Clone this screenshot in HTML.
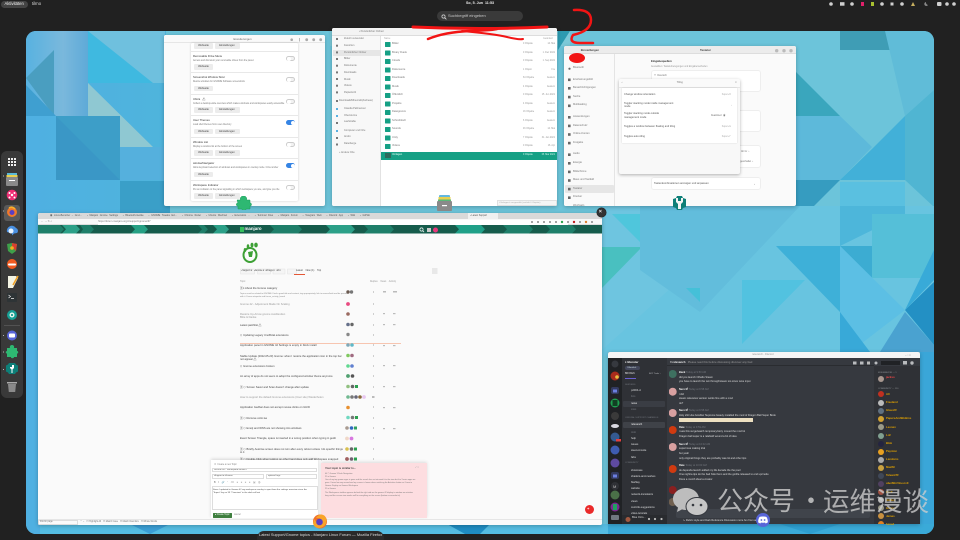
<!DOCTYPE html>
<html lang="de"><head><meta charset="utf-8"><title>Aktivitäten</title>
<style>
html{margin:0;padding:0;width:960px;height:540px;overflow:hidden;background:#212121}
body{margin:0;padding:0;width:960px;height:540px;overflow:hidden;background:#212121;position:relative;font-family:"Liberation Sans","Noto Sans CJK SC",sans-serif;color:#3d3d3d;filter:blur(.32px)}
div,span,svg{position:absolute;box-sizing:border-box}
.t{white-space:nowrap;line-height:1}
.win{background:#fafafa;border-radius:2px;overflow:hidden;box-shadow:0 1px 4px rgba(0,0,0,.25)}
.btn{height:5.5px;background:#ececec;border-radius:1px;font-size:2.6px;line-height:5.5px;text-align:center;color:#444}
.sw{width:9px;height:5px;border-radius:3px;background:#f2f2f2;border:.5px solid #ccc}
.sw.on{background:#3584e4;border-color:#3584e4}
.sw i{position:absolute;width:4px;height:4px;border-radius:50%;background:#fff;top:0;left:0}
.sw.on i{left:4.2px}
.g{color:#333;font-size:2.8px}
.dim{color:#777}
.d{color:#b9bbbe;font-size:2.6px}
.y{color:#e0a100;font-size:2.8px;font-weight:bold}
.f{font-size:2.7px;color:#444;left:202px}
</style></head><body>

<!-- top bar -->
<div style="left:1px;top:1px;width:27px;height:6.5px;background:#444;border-radius:4px"></div>
<div class="t" style="left:4.5px;top:2.2px;font-size:4.2px;color:#eee">Aktivitäten</div>
<div class="t" style="left:32px;top:2.2px;font-size:4.2px;color:#ddd">tilrno</div>
<div class="t" style="left:466px;top:2.2px;font-size:3.6px;font-weight:bold;color:#eee">So, 5. Jun &nbsp;11:53</div>

<!-- tray -->
<svg style="left:825px;top:0" width="135" height="8" viewBox="0 0 135 8">
<g fill="#d0d0d0"><circle cx="6" cy="4" r="1.800"/><rect x="15" y="2.200" width="4.500" height="3.500"/><circle cx="27" cy="4" r="1.800"/><rect x="36" y="2" width="3" height="4" fill="#e0206a"/><rect x="46" y="2" width="3" height="4" fill="#a8c030"/><circle cx="57" cy="4" r="1.800"/><rect x="65.500" y="2.500" width="3" height="3"/><circle cx="77" cy="4" r="1.800"/><path d="M86 6l2-4 2 4z" fill="#c8b060"/><path d="M101 2a2 2 0 1 0 2 3 2.500 2.500 0 0 1-2-3z" fill="#888"/><rect x="112" y="2" width="4.500" height="4" rx="1"/><circle cx="122" cy="4" r="1.800"/><circle cx="129" cy="4" r="1.800"/></g></svg>

<!-- wallpaper -->
<svg style="left:26px;top:31px" width="908" height="503" viewBox="26 31 908 503">
<defs><clipPath id="c"><rect x="26" y="31" width="908" height="503" rx="10"/></clipPath>
<linearGradient id="b1" x1="0" y="0" x2="1" y="1"><stop offset="0" stop-color="#58b2e0"/><stop offset=".6" stop-color="#7ab8dc"/><stop offset="1" stop-color="#5eaad8"/></linearGradient>
<linearGradient id="b2" x1="0" y="0" x2="1" y="0"><stop offset="0" stop-color="#4fb0e2"/><stop offset="1" stop-color="#4fb4dc"/></linearGradient></defs>
<g clip-path="url(#c)">
<rect x="26" y="31" width="908" height="503" fill="#6cc4da"/>
<rect x="26" y="31" width="140" height="503" fill="url(#b2)"/>
<rect x="26" y="31" width="62" height="85" fill="url(#b1)"/>
<polygon points="88,31 165,31 165,83 88,83" fill="#6fc0de"/>
<polygon points="88,31 153,83 88,83" fill="#3fb9e0"/>
<polygon points="26,78 54,50 54,116" fill="#4a9ec0"/>
<polygon points="26,85 56,116 26,116" fill="#3f9fd0"/>
<polygon points="88,83 153,147 120,147 120,116 88,116" fill="#8fc8d2"/>
<rect x="56" y="116" width="64" height="64" fill="#3d9ec8"/>
<polygon points="56,116 120,180 56,180" fill="#3a97c6"/>
<rect x="120" y="147" width="50" height="33" fill="#55b0dd"/>
<rect x="120" y="181" width="50" height="32" fill="#3a9fc8"/>
<rect x="330" y="31" width="240" height="15" fill="#7cc9d8"/>
<polygon points="558,31 570,31 558,50" fill="#2d9ab0"/>
<polygon points="840,31 885,31 905,50 840,50" fill="#3f9db5"/>
<polygon points="885,31 934,31 934,90 905,116" fill="#60bcd8"/>
<polygon points="796,72 840,116 796,116" fill="#3aa6bd"/>
<polygon points="796,116 840,116 872,147 840,180 796,180" fill="#5db9da"/>
<polygon points="873,148 905,116 905,180 840,180" fill="#42b0d8"/>
<polygon points="905,116 934,90 934,207 905,180" fill="#50b5d2"/>
<polygon points="795,180 840,180 806,214 795,214" fill="#369cc0"/>
<polygon points="840,182 905,182 905,215 934,215 934,250 840,250" fill="#5ac0e0"/>
<!-- lower right -->
<rect x="602" y="206" width="332" height="150" fill="#68c4e0"/>
<polygon points="602,206 700,206 680,280 602,350" fill="#6ec5e0"/>
<polygon points="612,214 676,214 676,278" fill="#4fc6dc"/>
<polygon points="602,247 642,247 602,288" fill="#49c0c0"/>
<polygon points="640,206 800,206 700,312 640,270" fill="#62bddc"/>
<polygon points="686,288 700,288 700,302" fill="#45c0d8"/>
<polygon points="742,280 805,280 742,344" fill="#52c2e0"/>
<polygon points="776,246 840,246 840,312" fill="#3eb0d8"/>
<polygon points="840,206 905,206 905,214 840,246" fill="#4db6da"/>
<polygon points="840,246 872,246 872,278" fill="#3cacd2"/>
<rect x="872" y="214" width="62" height="64" fill="#55bfd8"/>
<polygon points="840,246 905,310 840,360" fill="#5cbfe4"/>
<polygon points="905,310 934,282 934,345" fill="#2390c4"/>
<polygon points="934,280 934,250 905,310" fill="#38aad8"/>
<polygon points="840,312 870,352 840,352" fill="#38a9d8"/>
<polygon points="880,352 905,312 934,345 934,352" fill="#4aa2d0"/>
<rect x="40" y="524" width="570" height="10" fill="#55bde2"/>
<polygon points="447,524 490,524 480,534 465,534" fill="#1f8dc2"/>
<polygon points="130,524 170,524 150,534" fill="#3b9ed4"/>
<polygon points="920,352 934,352 934,534 920,534" fill="#3aa6d8"/>
<rect x="608" y="524" width="326" height="10" fill="#3aaad8"/>
<polygon points="780,524 840,524 810,534" fill="#2e9fd0"/>
</g></svg>

<!-- search -->
<div style="left:437px;top:11px;width:86px;height:10px;border-radius:5px;background:#3a3a3a"></div>
<svg style="left:441px;top:13.500px" width="6" height="6"><circle cx="2.500" cy="2.500" r="1.600" fill="none" stroke="#ddd" stroke-width=".7"/><path d="M3.700 3.700L5.400 5.400" stroke="#ddd" stroke-width=".8"/></svg>
<div class="t" style="left:448px;top:14px;font-size:4px;color:#c8c8c8">Suchbegriff eingeben</div>

<!-- window 1: extensions -->
<div class="win" style="left:164px;top:35px;width:161px;height:171px">
<div style="left:0;top:0;width:161px;height:8px;background:#fafafa;border-bottom:.4px solid #e6e6e6"></div>
<div class="t" style="left:69.500px;top:2.500px;font-size:2.800px;color:#666">Erweiterungen</div>
<svg style="left:125px;top:1.500px" width="34" height="6" fill="#aaa"><circle cx="2.700" cy="2.700" r="1.300"/><rect x="10" y="1" width=".8" height="3.500"/><circle cx="17.700" cy="2.700" r="1.400"/><circle cx="24.700" cy="2.700" r="1.400"/><circle cx="31.700" cy="2.700" r="1.400"/></svg>
<div style="left:27px;top:8px;width:107px;height:158px;background:#fff;box-shadow:0 0 2px rgba(0,0,0,.18);border-radius:1.500px"></div>
<div class="btn" style="left:30px;top:8px;width:19px">Webseite</div><div class="btn" style="left:50.500px;top:8px;width:25px">Einstellungen</div>
<div style="left:27px;top:15.500px;width:107px;border-top:.4px solid #e8e8e8"></div>
<div class="t g" style="left:29px;top:19.500px">Removable Drive Menu</div><div class="t dim" style="left:29px;top:24.500px;font-size:2.300px">Access and dismount your removable drives from the panel.</div><div class="sw" style="left:122px;top:20.500px"><i></i></div>
<div class="btn" style="left:30px;top:29px;width:19px">Webseite</div>
<div style="left:27px;top:37px;width:107px;border-top:.4px solid #e8e8e8"></div>
<div class="t g" style="left:29px;top:41px">Screenshot Window Sizer</div><div class="t dim" style="left:29px;top:46px;font-size:2.300px">Resize windows for GNOME Software screenshots</div><div class="sw" style="left:122px;top:42px"><i></i></div>
<div class="btn" style="left:30px;top:50.500px;width:19px">Webseite</div>
<div style="left:27px;top:58.500px;width:107px;border-top:.4px solid #e8e8e8"></div>
<div class="t g" style="left:29px;top:62.500px">Ubiza &nbsp; ⚠</div><div class="t dim" style="left:29px;top:67.500px;font-size:2.300px">Collect a desktop-wide overview which makes windows and workspaces easily accessible</div><div class="sw" style="left:122px;top:63.500px"><i></i></div>
<div class="btn" style="left:30px;top:72px;width:19px">Webseite</div><div class="btn" style="left:50.500px;top:72px;width:25px">Einstellungen</div>
<div style="left:27px;top:80px;width:107px;border-top:.4px solid #e8e8e8"></div>
<div class="t g" style="left:29px;top:84px">User Themes</div><div class="t dim" style="left:29px;top:89px;font-size:2.300px">Load shell themes from user directory</div><div class="sw on" style="left:122px;top:85px"><i></i></div>
<div class="btn" style="left:30px;top:93.500px;width:19px">Webseite</div><div class="btn" style="left:50.500px;top:93.500px;width:25px">Einstellungen</div>
<div style="left:27px;top:101.500px;width:107px;border-top:.4px solid #e8e8e8"></div>
<div class="t g" style="left:29px;top:105.500px">Window List</div><div class="t dim" style="left:29px;top:110.500px;font-size:2.300px">Display a window list at the bottom of the screen</div><div class="sw" style="left:122px;top:106.500px"><i></i></div>
<div class="btn" style="left:30px;top:115px;width:19px">Webseite</div><div class="btn" style="left:50.500px;top:115px;width:25px">Einstellungen</div>
<div style="left:27px;top:123px;width:107px;border-top:.4px solid #e8e8e8"></div>
<div class="t g" style="left:29px;top:127px">windowNavigator</div><div class="t dim" style="left:29px;top:132px;font-size:2.300px">Allow keyboard selection of windows and workspaces in overlay mode. Ctrl+number</div><div class="sw on" style="left:122px;top:128px"><i></i></div>
<div class="btn" style="left:30px;top:136.500px;width:19px">Webseite</div>
<div style="left:27px;top:144.500px;width:107px;border-top:.4px solid #e8e8e8"></div>
<div class="t g" style="left:29px;top:148.500px">Workspace Indicator</div><div class="t dim" style="left:29px;top:153.500px;font-size:2.300px">Put an indicator on the panel signalling in which workspace you are, and give you the</div><div class="sw" style="left:122px;top:149.500px"><i></i></div>
<div class="btn" style="left:30px;top:158px;width:19px">Webseite</div><div class="btn" style="left:50.500px;top:158px;width:25px">Einstellungen</div>
</div>
<svg style="left:236px;top:196px" width="16" height="14" viewBox="0 0 16 14"><path d="M1 4h3.500c-.8-2.500 1-4 3-4s3.800 1.500 3 4H14v3c2-.5 2 3.500 0 3v3h-4c.6 2-4.500 2-4 0H2v-3c-2.200.5-2.200-3.500 0-3z" fill="#2eb872" stroke="#1d9c5c" stroke-width=".5"/></svg>

<!-- window 2: files -->
<div class="win" style="left:332px;top:28px;width:225px;height:178px;background:#fff">
<div style="left:0;top:0;width:225px;height:7.500px;background:#f3f3f3;border-bottom:.4px solid #ddd"></div>
<div class="t" style="left:27px;top:2.500px;font-size:2.600px;color:#777">▪ Persönlicher Ordner</div>
<div style="left:0;top:7.500px;width:49px;height:171px;background:#f8f8f8;border-right:.4px solid #e2e2e2"></div>
<div style="left:1px;top:22px;width:47px;height:5.500px;background:#e6e6e6"></div>
<div class="t dim" style="left:12px;top:8.400px;font-size:2.500px;line-height:6.680px;white-space:pre">Zuletzt verwendet
Favoriten
Persönlicher Ordner
Bilder
Dokumente
Downloads
Musik
Videos
Papierkorb</div>
<svg style="left:3px;top:10px" width="7" height="120" fill="#777"><rect x="1" y="0" width="2" height="2"/><rect x="1" y="6.700" width="2" height="2"/><rect x="1" y="13.400" width="2" height="2"/><rect x="1" y="20" width="2" height="2"/><rect x="1" y="26.700" width="2" height="2"/><rect x="1" y="33.400" width="2" height="2"/><rect x="1" y="40" width="2" height="2"/><rect x="1" y="46.700" width="2" height="2"/><rect x="1" y="53.400" width="2" height="2"/><rect x="1" y="62" width="2" height="2"/><rect x="1" y="70" width="2" height="2" fill="#5ab0e0"/><rect x="1" y="77" width="2" height="2" fill="#5ab0e0"/><rect x="1" y="84" width="2" height="2"/><rect x="1" y="92" width="2" height="2" fill="#5ab0e0"/><rect x="1" y="99" width="2" height="2"/><rect x="1" y="105.500" width="2" height="2"/></svg>
<div class="t dim" style="left:7px;top:71.500px;font-size:2.500px">Download2Minecraft(Andreas)</div>
<div class="t dim" style="left:12px;top:77.800px;font-size:2.500px;line-height:6.800px;white-space:pre">Claudia Pallmanner
Obersturme
Laufstraße</div>
<div class="t dim" style="left:12px;top:99.600px;font-size:2.500px;line-height:6.800px;white-space:pre">Computer und Orte
Andro
Dateiberge</div>
<div class="t dim" style="left:7px;top:123.500px;font-size:2.500px">+ Andere Orte</div>
<div class="t dim" style="left:52px;top:9.500px;font-size:2.400px;color:#aaa">Name</div>
<div class="t dim" style="left:211px;top:9.500px;font-size:2.400px;color:#aaa">Geändert</div>
<svg style="left:49px;top:11px" width="176" height="150"><g fill="#16a085">
<rect x="4" y="3" width="5.500" height="5" rx=".5"/><rect x="4" y="11.500" width="5.500" height="5" rx=".5"/><rect x="4" y="20" width="5.500" height="5" rx=".5"/><rect x="4" y="28.500" width="5.500" height="5" rx=".5"/><rect x="4" y="37" width="5.500" height="5" rx=".5"/><rect x="4" y="45.500" width="5.500" height="5" rx=".5"/><rect x="4" y="54" width="5.500" height="5" rx=".5"/><rect x="4" y="62.500" width="5.500" height="5" rx=".5"/><rect x="4" y="71" width="5.500" height="5" rx=".5"/><rect x="4" y="79.500" width="5.500" height="5" rx=".5"/><rect x="4" y="88" width="5.500" height="5" rx=".5"/><rect x="4" y="96.500" width="5.500" height="5" rx=".5"/><rect x="4" y="105" width="5.500" height="5" rx=".5"/></g></svg>
<div class="t dim" style="left:60px;top:12.300px;font-size:2.600px;line-height:8.520px;white-space:pre">Bilder
Binary Duets
Clouds
Dokumente
Downloads
Musik
Öffentlich
Projekte
Dateigrenze
Schreibtisch
Sounds
Unity
Videos</div>
<div class="t dim" style="left:191px;top:12.300px;font-size:2.300px;line-height:8.520px;white-space:pre;color:#999">0 Objekte
0 Objekte
0 Objekte
1 Objekt
64 Objekte
4 Objekte
0 Objekte
4 Objekte
16 Objekte
6 Objekte
46 Objekte
7 Objekte
0 Objekte</div>
<div class="t dim" style="left:200px;top:12.300px;font-size:2.300px;line-height:8.520px;white-space:pre;color:#999;text-align:right;width:23px">14. Mai
1. Dez 2021
1. Sep 2021
Fre
Gestern
Gestern
15. Jun 2021
Gestern
Gestern
Gestern
14. Mai
31. Jan 2021
16. Apr</div>
<div style="left:49px;top:123.500px;width:176px;height:8px;background:#16a085"></div>
<div style="left:53px;top:125px;width:5.500px;height:5px;background:#2f6a5c"></div>
<div class="t" style="left:60px;top:126.300px;font-size:2.600px;color:#e6fff8">Vorlagen</div>
<div class="t" style="left:191px;top:126.300px;font-size:2.300px;color:#d3f4ec">0 Objekte</div><div class="t" style="left:200px;top:126.300px;font-size:2.300px;color:#d3f4ec;width:23px;text-align:right">15. Mar 2021</div>
<div style="left:165px;top:172px;width:60px;height:6px;background:#f5f5f5;border:.4px solid #e0e0e0"></div>
<div class="t dim" style="left:167px;top:173.700px;font-size:2.200px;color:#aaa">»Vorlagen« ausgewählt (enthält 0 Objekte)</div>
</div>
<svg style="left:437px;top:194px" width="15" height="17" viewBox="0 0 15 17"><rect x="2" y="1" width="11" height="3" rx="1" fill="#62b8e0"/><rect x="1.500" y="3" width="12" height="3" fill="#e8d050"/><rect x="1" y="5.500" width="13" height="3" fill="#5ab878"/><rect x="0" y="7" width="15" height="10" rx="1" fill="#8a8a8a"/><rect x="5" y="11" width="5" height="1.200" fill="#fff"/></svg>

<!-- window 3: settings -->
<div class="win" style="left:564px;top:46px;width:231.500px;height:160px">
<div style="left:0;top:0;width:232px;height:8px;background:#ececec;border-bottom:.4px solid #ddd"></div>
<div style="left:0;top:8px;width:51px;height:152px;background:#fafafa;border-right:.4px solid #e4e4e4"></div>
<div class="t" style="left:16.700px;top:2.800px;font-size:2.800px;color:#444;font-weight:bold">Einstellungen</div>
<div class="t" style="left:136px;top:2.800px;font-size:2.800px;color:#444;font-weight:bold">Tastatur</div>
<svg style="left:209px;top:1.500px" width="22" height="6" fill="#bbb"><circle cx="3.700" cy="2.700" r="1.700"/><circle cx="11" cy="2.700" r="1.700"/><circle cx="18" cy="2.700" r="1.700"/></svg>
<div class="t dim" style="left:9px;top:21.300px;font-size:2.600px">Bluetooth</div>
<div class="t dim" style="left:9px;top:29.700px;font-size:2.600px;line-height:8.600px;white-space:pre">Erscheinungsbild
Benachrichtigungen
Suche
Multitasking</div>
<div class="t dim" style="left:9px;top:67px;font-size:2.600px;line-height:8.600px;white-space:pre">Anwendungen
Datenschutz
Online-Konten
Freigabe</div>
<div class="t dim" style="left:9px;top:104.400px;font-size:2.600px;line-height:8.600px;white-space:pre">Audio
Energie
Bildschirme
Maus und Tastfeld</div>
<div style="left:1px;top:139px;width:49px;height:8px;background:#e6e6e6;border-radius:1px"></div>
<div class="t dim" style="left:9px;top:138.700px;font-size:2.600px;line-height:8.600px;white-space:pre">Tastatur
Drucker
Wechseln</div>
<svg style="left:3px;top:20px" width="5" height="140" fill="#666"><circle cx="2.500" cy="2.700" r="1.100"/><rect x="1" y="12.500" width="2.600" height="2.600"/><rect x="1" y="21" width="2.600" height="2.600"/><rect x="1" y="29.800" width="2.600" height="2.600"/><rect x="1" y="38.500" width="2.600" height="2.600"/><rect x="1" y="50" width="2.600" height="2.600"/><rect x="1" y="58.600" width="2.600" height="2.600"/><rect x="1" y="67.200" width="2.600" height="2.600"/><rect x="1" y="75.800" width="2.600" height="2.600"/><rect x="1" y="87.400" width="2.600" height="2.600"/><rect x="1" y="96" width="2.600" height="2.600"/><rect x="1" y="104.600" width="2.600" height="2.600"/><rect x="1" y="113.200" width="2.600" height="2.600"/><rect x="1" y="121.800" width="2.600" height="2.600"/><rect x="1" y="130.400" width="2.600" height="2.600"/></svg>
<div class="t" style="left:87px;top:14.300px;font-size:2.800px;color:#333;font-weight:bold">Eingabequellen</div>
<div class="t dim" style="left:87px;top:19.500px;font-size:2.300px;color:#999">Auswählen: Tastaturbelegungen und Eingabemethoden</div>
<div style="left:88px;top:25px;width:108px;height:20px;background:#fff;border-radius:1.500px;box-shadow:0 0 1.500px rgba(0,0,0,.2)"></div>
<div class="t dim" style="left:90px;top:28.500px;font-size:2.600px">⠿ &nbsp;Deutsch</div>
<div style="left:88px;top:65px;width:108px;height:20px;background:#fff;border-radius:1.500px;box-shadow:0 0 1.500px rgba(0,0,0,.2)"></div>
<div style="left:88px;top:100px;width:108px;height:21px;background:#fff;border-radius:1.500px;box-shadow:0 0 1.500px rgba(0,0,0,.2)"></div>
<div class="t dim" style="left:177px;top:104.500px;font-size:2.400px">Alt Gr &nbsp;›</div>
<div class="t dim" style="left:172px;top:114.500px;font-size:2.400px">Ausgeschaltet &nbsp;›</div>
<div class="t" style="left:88px;top:127px;font-size:2.700px;color:#333;font-weight:bold">Tastenkombinationen</div>
<div style="left:88px;top:132px;width:108px;height:11px;background:#fff;border-radius:1.500px;box-shadow:0 0 1.500px rgba(0,0,0,.2)"></div>
<div class="t" style="left:90px;top:136.500px;font-size:2.700px;color:#555">Tastenkombinationen anzeigen und anpassen</div>
<div class="t dim" style="left:190px;top:136.500px;font-size:2.800px">›</div>
</div>
<svg style="left:672px;top:195px" width="15" height="17" viewBox="0 0 15 17"><path d="M5 1h5l1 2 3 1v8l-3 1-1 2H5l-1-2-3-1V4l3-1z" fill="#0e7f78"/><path d="M6 3v3h3V3h2v4l-2 2v5H6V9L4 7V3z" fill="#f4f4f4"/></svg>

<!-- shortcuts dialog -->
<div class="win" style="left:619px;top:78.500px;width:121px;height:95px;background:#f8f8f8;border-radius:2px;box-shadow:0 1px 3px rgba(0,0,0,.3)">
<div style="left:0;top:0;width:121px;height:9px;background:#fafafa;border-bottom:.4px solid #e6e6e6"></div>
<div class="t dim" style="left:2.500px;top:2.500px;font-size:3px">‹</div>
<div class="t" style="left:57.700px;top:3px;font-size:2.600px;color:#777">Tiling</div>
<div class="t dim" style="left:116px;top:2.500px;font-size:3px">×</div>
<div style="left:2.700px;top:9px;width:115px;height:55.600px;background:#fff;box-shadow:0 0 1.500px rgba(0,0,0,.15)"></div>
<div class="t" style="left:5px;top:15.500px;font-size:2.600px;color:#555">Change window orientation</div>
<div class="t" style="left:5px;top:23.200px;font-size:2.600px;color:#555;line-height:3.500px;white-space:pre">Toggler stacking mode inside management
mode</div>
<div class="t" style="left:5px;top:33.800px;font-size:2.600px;color:#555;line-height:3.500px;white-space:pre">Toggler stacking mode outside
management mode</div>
<div class="t" style="left:5px;top:47px;font-size:2.600px;color:#555">Toggles a window between floating and tiling</div>
<div class="t" style="left:5px;top:57.400px;font-size:2.600px;color:#555">Toggles auto-tiling</div>
<div class="t dim" style="left:102.700px;top:15.500px;font-size:2.300px;color:#aaa">Super+O</div>
<div class="t dim" style="left:102.700px;top:47px;font-size:2.300px;color:#aaa">Super+G</div>
<div class="t dim" style="left:102.700px;top:57.400px;font-size:2.300px;color:#aaa">Super+Y</div>
<div class="t dim" style="left:112px;top:25px;font-size:2.800px;color:#bbb">›</div>
<div class="t" style="left:92px;top:36.500px;font-size:2.300px;color:#777">Deaktiviert &nbsp;◉</div>
</div>

<!-- red scribble -->
<svg style="left:0;top:0" width="960" height="60" viewBox="0 0 960 60" fill="none" stroke="#f21414" stroke-linecap="round" stroke-linejoin="round">
<path d="M413 27Q480 30 547 27" stroke-width="3"/>
<path d="M428 39Q445 32 470 31T497 29" stroke-width="2.500"/>
<path d="M462 31Q495 34 507 37T523 39" stroke-width="2"/>
<path d="M574 10Q591 9 591 20T573 35Q568 43 580 43L593 43" stroke-width="2.500"/>
</svg>
<svg style="left:566px;top:50px" width="24" height="16"><ellipse cx="11" cy="8" rx="8" ry="5" fill="#f21414"/></svg>

<!-- firefox -->
<div class="win" style="left:38px;top:212.500px;width:564px;height:312.500px;background:#fafafa">
<div style="left:0;top:0;width:564px;height:6.500px;background:#d9d9d9"></div>
<div class="t" style="left:12px;top:2px;font-size:2.400px;color:#555;word-spacing:1px">◉ Linux-Benutzer – Gnu/... &nbsp; ▪ Manjaro Gnome Settings &nbsp; ▪ Bluetooth-Geräte &nbsp; ▪ GNOME Tweaks Ext... &nbsp; ▪ Chrome Reiter &nbsp; ▪ Ubuntu Wechsel &nbsp; ▪ Extensions ... &nbsp; ▪ Terminal Files &nbsp; ▪ Manjaro Forum &nbsp; ▪ Telegram Web &nbsp; ▪ Discord App &nbsp; ▪ Wiki &nbsp; ▪ GitHub</div>
<div style="left:430px;top:0;width:30px;height:6.500px;background:#f0f0f0"></div>
<div class="t" style="left:432px;top:2px;font-size:2.400px;color:#555">▪ Latest Support</div>
<div style="left:0;top:6.500px;width:564px;height:6px;background:#f8f8f8;border-bottom:.4px solid #ddd"></div>
<div style="left:60px;top:7px;width:470px;height:5px;background:#fff"></div>
<div class="t dim" style="left:3px;top:8.500px;font-size:2.600px">← → ↻ ⌂</div>
<div class="t dim" style="left:60px;top:8.500px;font-size:2.600px">https://forum.manjaro.org/c/support/gnome/37</div>
<svg style="left:492px;top:7.500px" width="70" height="4"><g fill="#888"><circle cx="2" cy="2" r="1"/><circle cx="8" cy="2" r="1"/><circle cx="14" cy="2" r="1"/><circle cx="20" cy="2" r="1"/><circle cx="26" cy="2" r="1"/><circle cx="32" cy="2" fill="#2da44e" r="1.200"/><circle cx="38" cy="2" r="1"/><circle cx="44" cy="2" fill="#c02020" r="1.200"/><circle cx="50" cy="2" r="1"/><circle cx="56" cy="2" fill="#e08030" r="1.200"/><circle cx="62" cy="2" r="1"/></g></svg>
<!-- banner -->
<svg style="left:0;top:12.500px" width="564" height="8.500" viewBox="0 0 564 9" preserveAspectRatio="none"><rect width="564" height="9" fill="#165c4c"/>
<g fill="#1f7f6a"><path d="M0 0H22l4 4.500-4 4.500H0z"/><path d="M24 0h14l4 4.500-4 4.500H24l4-4.500z" fill="#2ca088"/><path d="M42 0h10l4 4.500-4 4.500H42l3-4.500z"/><path d="M93 0h13l4 4.500-4 4.500H93l4-4.500z" fill="#26a084"/><path d="M160 0h6l4 4.500-4 4.500h-6l4-4.500z"/><path d="M175 0h12l4 4.500-4 4.500h-12l4-4.500z" fill="#2ca088"/><path d="M232 0h28l4 4.500-4 4.500h-28l4-4.500z"/><path d="M288 0h25l4 4.500-4 4.500h-25l4-4.500z" fill="#2ca088"/><path d="M326 0h26l4 4.500-4 4.500h-26l4-4.500z"/><path d="M417 0h26l4 4.500-4 4.500h-26l4-4.500z" fill="#20a088"/><path d="M465 0h26l4 4.500-4 4.500h-26l4-4.500z"/><path d="M508 0h26l4 4.500-4 4.500h-26l4-4.500z"/></g></svg>
<div style="left:202px;top:14px;width:3.500px;height:5.500px;background:#35bf5c"></div>
<div class="t" style="left:206.500px;top:14.500px;font-size:4.400px;color:#fff;font-weight:bold">manjaro</div>
<svg style="left:381px;top:14px" width="20" height="6"><circle cx="2.500" cy="2.500" r="1.600" fill="none" stroke="#fff" stroke-width=".7"/><path d="M3.700 3.700l1.400 1.400" stroke="#fff" stroke-width=".7"/><rect x="8" y="1" width="4" height="4" fill="#ccc"/><circle cx="16.500" cy="3" r="2.500" fill="#e8387c"/></svg>
<!-- gnome logo -->
<svg style="left:202px;top:29px" width="20" height="22" viewBox="0 0 20 22"><ellipse cx="10" cy="13" rx="6.500" ry="7" fill="none" stroke="#3da035" stroke-width="2"/><ellipse cx="10.500" cy="12.500" rx="4" ry="4" fill="#fff"/><path d="M8 10l5-1-1 6-3 0z" fill="#3da035"/><ellipse cx="5" cy="8" rx="1.300" ry="2" fill="#3da035"/><ellipse cx="8" cy="4.500" rx="1.300" ry="2.200" fill="#3da035"/><ellipse cx="12" cy="3" rx="1.500" ry="2.300" fill="#3da035"/><ellipse cx="16" cy="3" rx="1.800" ry="2.400" fill="#3da035"/></svg>
<!-- filter row -->
<svg style="left:202px;top:55px" width="198" height="7"><g fill="#f5f5f5" stroke="#ddd" stroke-width=".4"><rect x=".5" y="1" width="14" height="5"/><rect x="17.500" y="1" width="13" height="5"/><rect x="33" y="1" width="12" height="5"/><rect x="47.500" y="1" width="9" height="5"/></g><rect x="192" y="0" width="5.500" height="6" fill="#e8e8e8"/></svg>
<div class="t" style="left:203.500px;top:57.300px;font-size:2.300px;color:#444">▪Support ▾ &nbsp; ▪Gnome ▾ &nbsp;all tags ▾ &nbsp; all ▾</div>
<div class="t" style="left:258px;top:57.300px;font-size:2.500px;color:#444">Latest &nbsp;&nbsp; New (1) &nbsp;&nbsp; Top</div>
<div style="left:256px;top:61.500px;width:11px;border-top:.5px solid #e45735"></div>
<div class="t" style="left:202px;top:68px;font-size:2.300px;color:#999">Topic</div>
<div class="t" style="left:332px;top:68px;font-size:2.300px;color:#999">Replies &nbsp;&nbsp; Views &nbsp;&nbsp; Activity</div>
<div class="t f" style="top:75.500px">▣ ℹ About the Gnome category</div>
<div class="t" style="left:202px;top:80.500px;font-size:2.100px;color:#888;line-height:3px;white-space:pre">Topics must be related to GNOME. Find a good title and content, tag appropriately, link to manual/wiki and be precise
with it. Forum etiquette and forum_activity_board</div>
<div class="t f" style="top:91.500px;color:#999">Gnome 42 - Adjustment Made On Scaling</div>
<div class="t f" style="top:100.500px;color:#999;line-height:3px;white-space:pre">Restore Up-Arrow gnome Ausblenden
Bitte &amp; Danke</div>
<div class="t f" style="top:112px">Latest patchlist ⚠</div>
<div class="t f" style="top:122.500px">⬡ Updating Legacy Unofficial extensions</div>
<div style="left:202px;top:130px;width:161px;border-top:.5px solid #f7c5b0"></div>
<div class="t f" style="top:132.500px">Application panel in GNOME 42 Settings is empty in Dock install</div>
<div class="t f" style="top:142px;line-height:3.500px;white-space:pre">Stable Update (2022-05-23) Gnome: when I restore the application icon in the top bar
not appear ⚠</div>
<div class="t f" style="top:153.500px">⬡ Gnome extensions broken</div>
<div class="t f" style="top:163.500px">An array of apps do not seem to adopt the configured window theme anymore</div>
<div class="t f" style="top:174px">▣ ⬡ Screen Saver and Scan doesn't change after update</div>
<div class="t f" style="top:184px;color:#999">How to support the default Gnome extensions (User site) Wiederholen</div>
<div class="t f" style="top:194.500px">Application Gedbar does not accept mouse clicks on GUID</div>
<div class="t f" style="top:205px">▣ ⬡ Remove color.ise</div>
<div class="t f" style="top:215px">▣ ⬡ Emoji and IDNS are not showing into windows</div>
<div class="t f" style="top:225.500px">Event Screen Triangle, space is inserted in a wrong position when typing in gedit</div>
<div class="t f" style="top:235px;line-height:3.500px;white-space:pre">▣ ⬡ Briefly Autorise screen does not turn after every reboot unless I do specific things
to it</div>
<div class="t f" style="top:246.500px">▣ ⬡ Double-Click when looking on other hand does only add Workspace snapped</div>
<!-- avatars -->
<svg style="left:305px;top:72px" width="60" height="180"><g>
<circle cx="5" cy="7" r="1.700" fill="#6a5a50"/><circle cx="8.500" cy="7" r="1.700" fill="#777"/>
<circle cx="5" cy="19" r="1.900" fill="#e84a80"/>
<circle cx="5" cy="29" r="1.800" fill="#9a6a60"/>
<circle cx="5" cy="39.500" r="1.800" fill="#66708a"/><circle cx="9" cy="39.500" r="1.700" fill="#666"/>
<circle cx="5" cy="49.500" r="1.700" fill="#888"/>
<circle cx="5" cy="60" r="1.800" fill="#7fa8b8"/><circle cx="9" cy="60" r="1.800" fill="#5fb8c8"/>
<circle cx="5" cy="70.500" r="1.800" fill="#80c860"/><circle cx="9" cy="70.500" r="1.800" fill="#a06a80"/>
<circle cx="5" cy="81" r="1.800" fill="#60d890"/><circle cx="9" cy="81" r="1.800" fill="#6080d0"/>
<circle cx="5" cy="91" r="1.900" fill="#50a070"/><circle cx="9.500" cy="91" r="1.800" fill="#555"/>
<circle cx="5" cy="101.500" r="1.800" fill="#90c080"/><circle cx="9.500" cy="101.500" r="1.800" fill="#666"/><rect x="12" y="100" width="3" height="3" fill="#2ca050"/>
<circle cx="5" cy="112" r="1.800" fill="#70b890"/><circle cx="9" cy="112" r="1.800" fill="#777"/><circle cx="13" cy="112" r="1.800" fill="#667"/><circle cx="17" cy="112" r="1.800" fill="#86683c"/><circle cx="21" cy="112" r="1.900" fill="#e8c8f0"/>
<circle cx="5" cy="122.500" r="1.800" fill="#e89030"/>
<circle cx="5" cy="132.500" r="1.800" fill="#70d8c0"/><circle cx="9.500" cy="132.500" r="1.800" fill="#777"/><rect x="12" y="131" width="3" height="3" fill="#2ca050"/>
<circle cx="4" cy="143" r="1.800" fill="#a89a90"/><circle cx="8.500" cy="143" r="1.800" fill="#3068c0"/><rect x="11" y="141.500" width="3" height="3" fill="#30a060"/>
<circle cx="4" cy="153.500" r="1.900" fill="#f0d8c8"/><circle cx="8.500" cy="153.500" r="1.900" fill="#d878e0"/>
<circle cx="4" cy="164" r="1.800" fill="#d8c050"/><circle cx="8.500" cy="164" r="1.800" fill="#666"/><rect x="11" y="162.500" width="3" height="3" fill="#2ca050"/>
<circle cx="4" cy="174" r="1.900" fill="#a06060"/><circle cx="8.500" cy="174" r="1.800" fill="#706070"/><rect x="11" y="172.500" width="3" height="3" fill="#2ca050"/>
</g>
<g fill="#bbb"><rect x="30" y="6" width=".7" height="2"/><rect x="30" y="18" width=".7" height="2"/><rect x="30" y="28" width=".7" height="2"/><rect x="30" y="39" width=".7" height="2"/><rect x="30" y="49" width=".7" height="2"/><rect x="30" y="59" width=".7" height="2"/><rect x="30" y="70" width=".7" height="2"/><rect x="30" y="80" width=".7" height="2"/><rect x="30" y="90" width=".7" height="2"/><rect x="30" y="101" width=".7" height="2"/><rect x="29" y="111" width="2.500" height="2"/><rect x="30" y="121" width=".7" height="2"/><rect x="30" y="132" width=".7" height="2"/><rect x="30" y="142" width=".7" height="2"/><rect x="30" y="152" width=".7" height="2"/><rect x="30" y="163" width=".7" height="2"/><rect x="30" y="173" width=".7" height="2"/>
<rect x="40" y="6" width="3" height="1.500"/><rect x="40" y="28" width="2" height="1.200"/><rect x="40" y="39" width="2" height="1.200"/><rect x="40" y="60" width="2" height="1.200"/><rect x="40" y="80" width="2" height="1.200"/><rect x="40" y="101" width="2" height="1.200"/><rect x="40" y="122" width="2" height="1.200"/><rect x="40" y="143" width="2" height="1.200"/>
<rect x="50" y="6" width="4" height="1.500"/><rect x="50" y="28" width="2.500" height="1.200"/><rect x="50" y="39" width="2.500" height="1.200"/><rect x="50" y="60" width="2.500" height="1.200"/><rect x="50" y="80" width="2.500" height="1.200"/><rect x="50" y="101" width="2.500" height="1.200"/><rect x="50" y="122" width="2.500" height="1.200"/><rect x="50" y="143" width="2.500" height="1.200"/></g></svg>
<!-- composer -->
<div style="left:173px;top:247px;width:107px;height:58px;background:#fff;box-shadow:0 -1px 3px rgba(0,0,0,.15)"></div>
<div class="t" style="left:176px;top:251px;font-size:2.300px;color:#888">⟲ &nbsp;Create a new Topic</div>
<div class="t" style="left:176px;top:256px;font-size:2.300px;color:#555">Gnome 42 - Workspace-Ansicht</div>
<div style="left:174px;top:255px;width:105px;height:4.500px;border:.4px solid #ddd"></div>
<div style="left:174px;top:261px;width:52px;height:5px;border:.4px solid #ddd"></div><div style="left:228px;top:261px;width:51px;height:5px;border:.4px solid #ddd"></div>
<div class="t" style="left:176px;top:262.500px;font-size:2.200px;color:#555">▪Support ▸ ▪Gnome</div><div class="t" style="left:230px;top:262.500px;font-size:2.200px;color:#555">optional tags</div>
<div class="t" style="left:176px;top:269.500px;font-size:2.400px;color:#666;word-spacing:2px">B I 🔗 “ &lt;/&gt; ≡ ≡ ≡ ≡ ▣ ⊕</div>
<div class="t" style="left:175px;top:276px;font-size:2.200px;color:#444;line-height:3.200px;white-space:pre">Since I updated to Gnome 42 my workspace overlay is apart from the settings overview since the
"Super"-key or 3F "Overview" in the dock will not</div>
<div style="left:174px;top:273.500px;width:106px;height:24px;border:.4px solid #ddd"></div>
<div style="left:175px;top:300px;width:18.500px;height:5px;background:#3f7f3f;border-radius:.5px"></div>
<div class="t" style="left:177px;top:301.500px;font-size:2.300px;color:#fff">▸ Create Topic</div>
<div class="t" style="left:196px;top:301.500px;font-size:2.300px;color:#888">cancel</div>
<div style="left:283px;top:250.500px;width:106px;height:55px;background:#fddde0;box-shadow:0 -1px 3px rgba(0,0,0,.12)"></div>
<div class="t" style="left:287px;top:255px;font-size:2.700px;color:#444;font-weight:bold">Your topic is similar to...</div>
<div class="t" style="left:287px;top:260.500px;font-size:1.950px;color:#777;line-height:3.100px;white-space:pre">▣ ⬡ Gnome 3 Dash Navigation
▦ in Gnome
One of my top gnome apps is gone and the search has not returned it to the view but the 3 main apps are
gone. I found no way around and my screen is frozen when switching the Activities button so I have to
Gnome Display on Gnome Workspace
▦ in Gnome
The Workspaces toolbar appears behind the right side on the gnome 42 display to window on activities
long and the screen view works well for everything on the screen (bottom screenshot is)</div>
<div class="t dim" style="left:377px;top:254px;font-size:2.500px;color:#aaa">✓ ×</div>
<!-- footer -->
<div style="left:0;top:306.500px;width:564px;height:6px;background:#fafafa;border-top:.4px solid #e6e6e6"></div>
<div style="left:0;top:307px;width:40px;height:5.500px;border:.4px solid #ddd"></div>
<div class="t" style="left:2px;top:308.500px;font-size:2.300px;color:#777">Find in page</div>
<div class="t" style="left:42px;top:308.500px;font-size:2.300px;color:#777">⌃ ⌄ &nbsp; ☐ Highlight All &nbsp; ☐ Match Case &nbsp; ☐ Match Diacritics &nbsp; ☐ Whole Words</div>
<div style="left:546.500px;top:292px;width:9px;height:9px;border-radius:50%;background:#ea2a2a"></div>
<div class="t" style="left:549px;top:294.500px;font-size:4px;color:#fff;font-weight:bold">+</div>
</div>
<div style="left:596.500px;top:208px;width:9px;height:9px;border-radius:50%;background:#333;box-shadow:0 0 0 .5px #222"></div>
<div class="t" style="left:598.800px;top:209.800px;font-size:5.500px;color:#eee;font-weight:bold">×</div>

<!-- discord -->
<div class="win" style="left:608px;top:352px;width:312px;height:172px;background:#36393f;border-radius:2px 2px 0 0">
<div style="left:0;top:0;width:312px;height:6px;background:#f5f5f5"></div>
<div class="t" style="left:144px;top:1.800px;font-size:2.500px;color:#999">relevanch - Discord</div>
<div class="t" style="left:297px;top:1.500px;font-size:2.800px;color:#888">– ▫ ×</div>
<div style="left:0;top:6px;width:13.500px;height:166px;background:#202225"></div>
<div style="left:13.500px;top:6px;width:45px;height:166px;background:#2f3136"></div>
<div style="left:58.500px;top:6px;width:207px;height:8px;background:#36393f;border-bottom:.4px solid #2a2c30"></div>
<div style="left:265.500px;top:14px;width:46.500px;height:158px;background:#2f3136"></div>
<svg style="left:1px;top:8px" width="12" height="164"><g>
<circle cx="6" cy="4" r="3.500" fill="#36393f"/><circle cx="6" cy="16" r="4.500" fill="#a82c1c"/><circle cx="8" cy="17" r="1.800" fill="#e8c040"/>
<rect x="2" y="27" width="8" height="7" rx="2" fill="#333a60"/><rect x="4" y="29.500" width="4" height="3" fill="#6b7fe0"/>
<circle cx="6" cy="43" r="4.500" fill="#1fa050"/><rect x="3.500" y="40" width="5" height="6" fill="#124024"/>
<circle cx="6" cy="56" r="4" fill="#3a3a3a"/>
<ellipse cx="6" cy="66" rx="4" ry="2" fill="#d8d8e0"/>
<circle cx="6" cy="77" r="4.500" fill="#345a90"/><rect x="7" y="79" width="5" height="2.500" fill="#e04040"/>
<circle cx="6" cy="90" r="4.500" fill="#3e5cb0"/><circle cx="6" cy="103" r="4.500" fill="#5e4aa0"/>
<rect x="2" y="112" width="8" height="7" rx="2" fill="#333a60"/><rect x="4" y="114.500" width="4" height="3" fill="#6b7fe0"/>
<circle cx="6" cy="126" r="4" fill="#2f3136"/><text x="4" y="128" font-size="4" fill="#bbb">M</text>
<circle cx="6" cy="135" r="4.500" fill="#4a7048"/><circle cx="6" cy="147" r="4.500" fill="#7a2a90"/><rect x="4" y="144" width="4" height="6" fill="#20a060"/>
<rect x="2" y="155" width="8" height="5" rx="1" fill="#707880"/>
</g></svg>
<div class="t" style="left:17px;top:9px;font-size:3px;color:#eee;font-weight:bold">♦ Blender</div>
<div style="left:16.500px;top:14px;width:15px;height:4px;border-radius:2px;background:#43475a"></div>
<div class="t" style="left:19px;top:15px;font-size:2.200px;color:#cdd">Öffentlich</div>
<div class="t" style="left:17px;top:21px;font-size:2.300px;color:#ddd">BROKEN</div><div class="t d" style="left:41px;top:21px;font-size:2.200px">BOT Tools ›</div>
<div style="left:17px;top:26px;width:11px;height:1px;background:#6a60d0"></div>
<div class="t d" style="left:17px;top:32px;font-size:2.200px;color:#72767d">SERVERS</div>
<div class="t d" style="left:23px;top:37.500px;color:#dcddde">p2004-ci</div>
<div class="t d" style="left:23px;top:44px;color:#72767d">lists</div>
<div style="left:15px;top:49px;width:42px;height:6px;background:#3a3d44;border-radius:1px"></div>
<div class="t d" style="left:23px;top:50.500px;color:#eee">news</div>
<div class="t d" style="left:23px;top:57px;color:#72767d">sites</div>
<div class="t d" style="left:17px;top:65px;font-size:2.200px;color:#72767d">OFFICIAL SUPPORT CHANNELS</div>
<div style="left:15px;top:69.500px;width:42px;height:6.500px;background:#3f4248;border-radius:1px"></div>
<div class="t" style="left:23px;top:71.500px;font-size:2.600px;color:#eee">relevanch</div>
<div class="t d" style="left:23px;top:77.500px;color:#72767d;line-height:6.300px;white-space:pre">todo
<span style="position:static;color:#dcddde">help
issues
steel-console
fabs</span></div>
<div class="t d" style="left:17px;top:110px;font-size:2.200px;color:#72767d">COMMUNITY</div>
<div class="t d" style="left:23px;top:115.500px;color:#dcddde;line-height:6.200px;white-space:pre">showcase
shaders-and-meshes
flashlay
website
network-translators
views
cool-life-suggestions
video-tutorials</div>
<div style="left:13.500px;top:163px;width:45px;height:9px;background:#292b2f"></div>
<div class="t d" style="left:24px;top:165px;color:#ddd">Blue Octo...</div>
<svg style="left:13.500px;top:163px" width="45" height="9"><circle cx="6" cy="4.500" r="2.500" fill="#a05840"/><circle cx="27" cy="4" r="1.100" fill="#bbb"/><circle cx="33" cy="4" r="1.100" fill="#bbb"/><circle cx="39.500" cy="4" r="1.100" fill="#bbb"/></svg>
<div class="t" style="left:62px;top:8.500px;font-size:2.800px;color:#eee;font-weight:bold">⌗ relevanch &nbsp;<span style="position:static;color:#999;font-weight:normal">&nbsp;Please read this before discussing discover any bad</span></div>
<svg style="left:245px;top:7.500px" width="66" height="6"><g fill="#b9bbbe"><rect x="0" y="1.500" width="3.500" height="3"/><rect x="7" y="1.500" width="3.500" height="3"/><rect x="14" y="1.500" width="3" height="3" fill="#bbb"/><circle cx="23" cy="3" r="1.500"/></g><rect x="28" y="1" width="19" height="4" fill="#202225"/><rect x="50" y="1" width="4" height="3.500" fill="#b9bbbe"/><circle cx="59" cy="3" r="1.700" fill="#b9bbbe"/></svg>
<!-- messages -->
<svg style="left:61px;top:18px" width="12" height="150"><circle cx="3.700" cy="4" r="4" fill="#3e7060"/><circle cx="3.700" cy="21.700" r="4" fill="#d8a0a0"/><circle cx="3.700" cy="43" r="4" fill="#d8a0a0"/><circle cx="3.700" cy="60" r="4" fill="#d03a10"/><circle cx="3.700" cy="77" r="4" fill="#d8a0a0"/><circle cx="3.700" cy="99" r="4" fill="#d03a10"/><circle cx="3.700" cy="120" r="4" fill="#8a2020"/><circle cx="3.700" cy="132" r="4" fill="#706050"/></svg>
<div class="t d" style="left:71px;top:19px;color:#ddd;line-height:4.700px;white-space:pre"><span style="position:static;color:#eee;font-weight:bold">Bank</span> <span style="position:static;color:#72767d">Today at 9:50 AM</span>
did you launch Othello Steam
you have to launch the win through/steam too since wine input</div>
<div class="t d" style="left:71px;top:36px;color:#ddd;line-height:4.700px;white-space:pre"><span style="position:static;color:#eee;font-weight:bold">Nero 🗹</span> <span style="position:static;color:#72767d">Today at 9:58 AM</span>
i did
steam relevance version works fine with a mod
ok?</div>
<div class="t d" style="left:71px;top:57px;color:#ddd;line-height:4.700px;white-space:pre"><span style="position:static;color:#eee;font-weight:bold">Nero 🗹</span> <span style="position:static;color:#72767d">Today at 9:58 AM</span>
Holy shit Like bowblur Supreme beauty installed the mod of Dragon Ball Super Book</div>
<div style="left:71px;top:66px;width:74px;height:3.800px;background:#ecdfc0"></div>
<div class="t d" style="left:71px;top:73.500px;color:#ddd;line-height:4.700px;white-space:pre"><span style="position:static;color:#eee;font-weight:bold">Rate</span> <span style="position:static;color:#72767d">Today at 9:59 AM</span>
i saw this surge/watch temporary/story moved the mod lol
Dragon ball super is a ralefield wound a bit of idea</div>
<div class="t d" style="left:71px;top:90.500px;color:#ddd;line-height:4.700px;white-space:pre"><span style="position:static;color:#eee;font-weight:bold">Nero 🗹</span> <span style="position:static;color:#72767d">Today at 10:02 AM</span>
supernova making trial
but yeah
only original things they are probably was lol and other tips</div>
<div class="t d" style="left:71px;top:112px;color:#ddd;line-height:4.700px;white-space:pre"><span style="position:static;color:#eee;font-weight:bold">Rate</span> <span style="position:static;color:#72767d">Today at 10:03 AM</span>
ok dependa launch added my life decade the the pool
One night/a tips do the bad hide them and the gorilla released to end up/mode
Done a month ideal a creator</div>
<div style="left:68px;top:157px;width:194px;height:9px;background:#40444b;border-radius:2px"></div>
<div class="t d" style="left:75px;top:168px;color:#ddd">↳ Rubric style and Dark Reference Discussion more fun from and other tips</div>
</div>

<!-- discord members -->
<div class="t" style="left:878px;top:372px;font-size:2.200px;color:#8e9297">MODERATOR — 1</div>
<div class="t" style="left:878px;top:388px;font-size:2.200px;color:#8e9297">COMMUNITY — 110</div>
<svg style="left:875px;top:373px" width="10" height="151"><g fill="#777"><circle cx="6" cy="6" r="3" fill="#a89890"/><circle cx="6" cy="21" r="3" fill="#c03020"/><circle cx="6" cy="30" r="3" fill="#bbb"/><circle cx="6" cy="38" r="3" fill="#607080"/><circle cx="6" cy="46" r="3" fill="#d0a030"/><circle cx="6" cy="54" r="3" fill="#998"/><circle cx="6" cy="63" r="3" fill="#80a090"/><circle cx="6" cy="71" r="3" fill="#242440"/><circle cx="6" cy="79" r="3" fill="#e8a020"/><circle cx="6" cy="87" r="3" fill="#aaa"/><circle cx="6" cy="95" r="3" fill="#c8a040"/><circle cx="6" cy="103" r="3" fill="#404858"/><circle cx="6" cy="111" r="3" fill="#504060"/><circle cx="6" cy="119" r="3" fill="#a05040"/><circle cx="6" cy="127" r="3" fill="#bbb"/><circle cx="6" cy="135" r="3" fill="#998"/><circle cx="6" cy="143" r="3" fill="#c89040"/><circle cx="6" cy="151" r="3" fill="#e08020"/></g></svg>
<div class="t" style="left:886px;top:376px;font-size:2.800px;color:#f04747;font-weight:bold">jackso</div>
<div class="y" style="position:absolute;left:886px;top:390px;line-height:8.130px;white-space:pre">All
Freeland
GlassFF
PapersAndWeikins
Leonex
Lol!
Blok
Paynton
Landoms
MaxIM
Teleant7F
uberMirrOne.nvll
Kroll
Hiddev
Hooper
James
bened</div>

<!-- watermark -->
<svg style="left:672px;top:487px" width="38" height="30" viewBox="0 0 38 30"><path d="M14 1C6.800 1 1 6 1 12c0 3.500 2 6.500 5 8.500L5 25l5-2.600c1.300.4 2.600.6 4 .6 7.200 0 13-5 13-11S21.200 1 14 1z" fill="#bdbdbd"/><ellipse cx="25" cy="19.500" rx="11" ry="9" fill="#c6c6c6" stroke="#36393f" stroke-width="1"/><circle cx="21" cy="18" r="1.300" fill="#36393f"/><circle cx="29" cy="18" r="1.300" fill="#36393f"/></svg>
<div class="t" style="left:717px;top:487px;font-size:26px;color:rgba(200,200,200,.85);font-family:'Noto Sans CJK SC','WenQuanYi Zen Hei',sans-serif">公众号</div>
<div class="t" style="left:798px;top:487px;font-size:26px;color:rgba(210,210,210,.8);font-family:'Noto Sans CJK SC',sans-serif">·</div>
<div class="t" style="left:823px;top:487px;font-size:26.500px;color:rgba(205,205,205,.78);font-family:'Noto Sans CJK SC','WenQuanYi Zen Hei',sans-serif">运维漫谈</div>

<!-- discord app icon -->
<div style="left:756px;top:513px;width:14px;height:14px;border-radius:50%;background:#5865d8"></div>
<svg style="left:758px;top:516px" width="10" height="8" viewBox="0 0 10 8"><path d="M1.500 1C3 .3 7 .3 8.500 1 9.700 3 10 5 9.700 6.500L7.600 7.500 7 6.500c-1.200.4-2.800.4-4 0L2.400 7.500.3 6.500C0 5 .3 3 1.500 1z" fill="#fff"/><circle cx="3.400" cy="4" r=".9" fill="#5865d8"/><circle cx="6.600" cy="4" r=".9" fill="#5865d8"/></svg>

<!-- firefox icon + caption -->
<div style="left:257px;top:530.500px;width:127px;height:14px;border-radius:7px;background:#2a2a2a"></div>
<div class="t" style="left:259px;top:533px;font-size:3.950px;color:#ddd">Latest Support/Gnome topics - Manjaro Linux Forum — Mozilla Firefox</div>
<svg style="left:312px;top:513px" width="16" height="16" viewBox="0 0 16 16"><circle cx="8" cy="8.500" r="7" fill="#f0702a"/><path d="M4 5c2-4 8-5 10 0 2 5-2 10-7 10S-1 10 3 6c0 2 1 3 2 3 0-2 2-3 4-3-2-1-3-1-5-1z" fill="#f8a42a"/><circle cx="7.500" cy="9" r="3.300" fill="#5a3fc4"/></svg>

<!-- dock -->
<div style="left:1px;top:151px;width:22px;height:247px;border-radius:6px;background:rgba(60,60,60,.92)"></div>
<div style="left:4px;top:205px;width:16px;height:16px;border-radius:3px;background:#5a5a5a"></div>
<svg style="left:0;top:151px" width="24" height="247" viewBox="0 151 24 247">
<g fill="#eee"><rect x="8" y="158" width="2" height="2"/><rect x="11" y="158" width="2" height="2"/><rect x="14" y="158" width="2" height="2"/><rect x="8" y="161" width="2" height="2"/><rect x="11" y="161" width="2" height="2"/><rect x="14" y="161" width="2" height="2"/><rect x="8" y="164" width="2" height="2"/><rect x="11" y="164" width="2" height="2"/><rect x="14" y="164" width="2" height="2"/></g>
<rect x="7" y="173" width="10" height="2" fill="#5ab8d8"/><rect x="6.500" y="175" width="11" height="2" fill="#e8d050"/><rect x="6" y="177" width="12" height="9" rx="1" fill="#8a8a8a"/><rect x="9" y="180" width="6" height="1" fill="#fff"/>
<circle cx="12" cy="195" r="5.300" fill="#ee2e74"/><circle cx="12" cy="195" r="1.200" fill="#fff"/><circle cx="9.500" cy="193" r="1" fill="#fff"/><circle cx="14.500" cy="193" r="1" fill="#fff"/><circle cx="9.500" cy="197.500" r="1" fill="#fff"/><circle cx="14.500" cy="197.500" r="1" fill="#fff"/>
<circle cx="12" cy="212" r="5" fill="#f07a2a"/><circle cx="12" cy="212.500" r="2.500" fill="#5a3fc4"/><path d="M9 208q3-2 6 1" stroke="#fbb12a" stroke-width="1.500" fill="none"/>
<path d="M7 232a5 5 0 0 1 9-4 3 3 0 0 1 1 5l-3 .5-2 2v-2z" fill="#4a90e0"/><circle cx="11" cy="231" r="2.500" fill="#e8f4ff"/>
<path d="M12 243l5 1-1 7-4 3-4-3-1-7z" fill="#3fa04a"/><path d="M12 243l5 1-1 7-4-4z" fill="#d84030"/><circle cx="12" cy="248" r="1.800" fill="#f0b020"/>
<circle cx="12" cy="264" r="5" fill="#f05a20"/><rect x="8" y="263.500" width="8" height="2" rx="1" fill="#fff"/>
<path d="M8 276h8l2 2-5 10H8z" fill="#f4f4e4"/><path d="M13 285l5-9" stroke="#f0a020" stroke-width="1.500"/>
<rect x="7" y="293" width="10" height="9" rx="1" fill="#2e3436"/><path d="M8.500 295l2 1.500-2 1.500M11 298.500h3" stroke="#eee" stroke-width=".7" fill="none"/>
<circle cx="12" cy="315" r="5" fill="#17a095"/><circle cx="12" cy="315" r="2.500" fill="#e8f8f0"/><circle cx="12" cy="315" r="1.100" fill="#17a095"/>
<rect x="4" y="325" width="16" height=".5" fill="#6a6a6a"/>
<circle cx="12" cy="335.500" r="5" fill="#5865d8"/><rect x="9" y="333.500" width="6" height="4" rx="1" fill="#fff"/>
<path d="M7 348h3c-.7-2 .8-3 2-3s2.700 1 2 3h3v3c1.600-.4 1.600 3 0 2.500V357h-3c.4 1.600-3.600 1.600-3 0H7v-3.500c-1.600.4-1.600-2.500 0-2.500z" fill="#2eb872"/>
<path d="M9 363h6l1 1.500 2 1v6l-2 1-1 1.500H9l-1-1.500-2-1v-6l2-1z" fill="#0e7f78"/><path d="M10 365v2h2v-2h2v3l-1.500 1.500V373h-1v-3.500L10 368v-3z" fill="#fff"/>
<rect x="7" y="382" width="10" height="1.500" fill="#aaa"/><path d="M8 384h8l-.8 8H8.800z" fill="#8a8a8a"/>
<g fill="#ddd"><circle cx="3.500" cy="176" r=".5"/><circle cx="3.500" cy="211" r=".5"/><circle cx="3.500" cy="335.500" r=".5"/><circle cx="3.500" cy="352" r=".5"/><circle cx="3.500" cy="369.500" r=".5"/></g>
</svg>
</body></html>
